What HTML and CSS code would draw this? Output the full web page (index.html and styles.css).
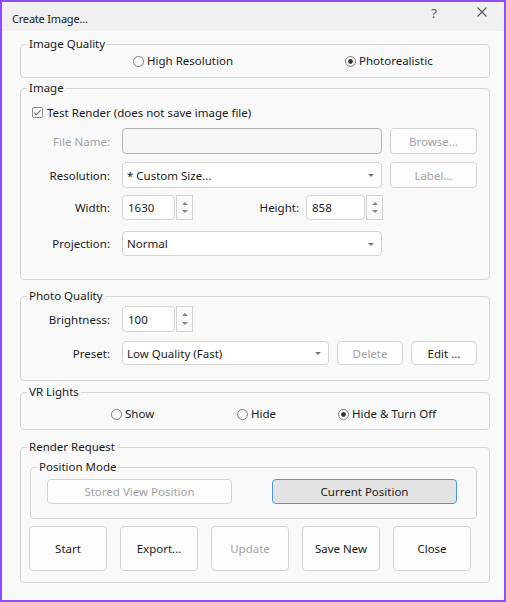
FILE: index.html
```html
<!DOCTYPE html>
<html>
<head>
<meta charset="utf-8">
<link rel="stylesheet" href="styles.css">
</head>
<body>
<div class="window">
  <div class="titlebar">
    <span class="title">Create Image...</span>
    <span class="help">?</span>
    <span class="close"><svg width="10" height="10" viewBox="0 0 10 10"><path d="M0.5 0.5 L9.5 9.5 M9.5 0.5 L0.5 9.5" stroke="#555" stroke-width="1.1" fill="none"/></svg></span>
  </div>
  <div class="content">
    <fieldset class="group g-quality">
      <legend>Image Quality</legend>
      <div class="radios quality-radios">
        <label class="radio"><svg class="rb" width="11" height="11" viewBox="0 0 11 11"><circle cx="5.5" cy="5.5" r="5" fill="#fff" stroke="#7a7a7a"/></svg><span>High Resolution</span></label>
        <label class="radio"><svg class="rb" width="11" height="11" viewBox="0 0 11 11"><circle cx="5.5" cy="5.5" r="5" fill="#fff" stroke="#7a7a7a"/><circle cx="5.5" cy="5.5" r="2.4" fill="#333"/></svg><span>Photorealistic</span></label>
      </div>
    </fieldset>

    <fieldset class="group g-image">
      <legend>Image</legend>
      <div class="check-row">
        <svg class="cb" width="11" height="11" viewBox="0 0 11 11"><rect x="0.5" y="0.5" width="10" height="10" rx="1.5" fill="#fff" stroke="#8a8a8a"/><path d="M2.3 5.6 L4.4 7.7 L8.7 3.2" stroke="#6a6a6a" stroke-width="1.1" fill="none"/></svg>
        <span>Test Render (does not save image file)</span>
      </div>
      <div class="row row-file">
        <span class="lbl disabled">File Name:</span>
        <span class="input input-wide input-disabled"></span>
        <span class="btn btn-side disabled">Browse...</span>
      </div>
      <div class="row row-res">
        <span class="lbl">Resolution:</span>
        <span class="input input-wide select">* Custom Size...<i class="arrow"></i></span>
        <span class="btn btn-side disabled">Label...</span>
      </div>
      <div class="row row-size">
        <span class="lbl">Width:</span>
        <span class="input input-w">1630</span>
        <span class="spin"><i class="up"></i><i class="down"></i></span>
        <span class="lbl-h">Height:</span>
        <span class="input input-h">858</span>
        <span class="spin"><i class="up"></i><i class="down"></i></span>
      </div>
      <div class="row row-proj">
        <span class="lbl">Projection:</span>
        <span class="input input-wide select">Normal<i class="arrow"></i></span>
      </div>
    </fieldset>

    <fieldset class="group g-photo">
      <legend>Photo Quality</legend>
      <div class="row row-bright">
        <span class="lbl">Brightness:</span>
        <span class="input input-w">100</span>
        <span class="spin"><i class="up"></i><i class="down"></i></span>
      </div>
      <div class="row row-preset">
        <span class="lbl">Preset:</span>
        <span class="input input-preset select">Low Quality (Fast)<i class="arrow"></i></span>
        <span class="btn btn-small disabled">Delete</span>
        <span class="btn btn-small">Edit ...</span>
      </div>
    </fieldset>

    <fieldset class="group g-vr">
      <legend>VR Lights</legend>
      <div class="radios vr-radios">
        <label class="radio"><svg class="rb" width="11" height="11" viewBox="0 0 11 11"><circle cx="5.5" cy="5.5" r="5" fill="#fff" stroke="#7a7a7a"/></svg><span>Show</span></label>
        <label class="radio"><svg class="rb" width="11" height="11" viewBox="0 0 11 11"><circle cx="5.5" cy="5.5" r="5" fill="#fff" stroke="#7a7a7a"/></svg><span>Hide</span></label>
        <label class="radio"><svg class="rb" width="11" height="11" viewBox="0 0 11 11"><circle cx="5.5" cy="5.5" r="5" fill="#fff" stroke="#7a7a7a"/><circle cx="5.5" cy="5.5" r="2.4" fill="#333"/></svg><span>Hide &amp; Turn Off</span></label>
      </div>
    </fieldset>

    <fieldset class="group g-render">
      <legend>Render Request</legend>
      <fieldset class="group g-position">
        <legend>Position Mode</legend>
        <div class="pos-buttons">
          <span class="btn btn-pos disabled">Stored View Position</span>
          <span class="btn btn-pos btn-active">Current Position</span>
        </div>
      </fieldset>
      <div class="actions">
        <span class="btn btn-big">Start</span>
        <span class="btn btn-big">Export...</span>
        <span class="btn btn-big disabled">Update</span>
        <span class="btn btn-big">Save New</span>
        <span class="btn btn-big">Close</span>
      </div>
    </fieldset>
  </div>
</div>
</body>
</html>
```

FILE: styles.css
```css
* { box-sizing: border-box; }

body {
  margin: 0;
  font-family: "Noto Sans", "DejaVu Sans", sans-serif;
  font-size: 11.5px;
  color: #1b1b1b;
}

.window {
  width: 506px;
  height: 602px;
  border: 2px solid #8b4ef2;
  background: #f9f9f9;
  display: flex;
  flex-direction: column;
}

.titlebar {
  height: 29px;
  flex: none;
  background: #f0f0f0;
  display: flex;
  align-items: flex-start;
}

.title {
  flex: 1;
  padding: 9px 0 0 10px;
  line-height: 16px;
  font-size: 11px;
  letter-spacing: -0.2px;
}

.help {
  width: 16px;
  margin-top: 3px;
  text-align: center;
  font-size: 13px;
  line-height: 16px;
  color: #555;
}

.close {
  width: 16px;
  margin: 5px 14px 0 32px;
  display: flex;
  justify-content: center;
}

.content {
  padding: 5px 14px 0 18px;
}

.group {
  margin: 0;
  padding: 0;
  border: 1px solid #d5d5d5;
  border-radius: 4px;
  min-width: 0;
}

.group legend {
  margin-left: 6px;
  padding: 0 2px;
  line-height: 16px;
}

/* Radios */
.radios {
  display: grid;
  height: 18px;
  align-items: center;
}

.radio {
  display: flex;
  align-items: center;
  gap: 3px;
  line-height: 16px;
}

.rb { flex: none; }

.g-quality { padding-bottom: 7px; }
.quality-radios {
  padding-left: 112px;
  grid-template-columns: 212px auto;
}

/* Image group */
.g-image { margin-top: 2px; padding-bottom: 23px; }

.check-row {
  display: flex;
  align-items: center;
  gap: 4px;
  height: 16px;
  margin-top: 8px;
  padding-left: 11px;
}

.row {
  display: flex;
  align-items: center;
}

.row-file { margin-top: 8px; height: 26px; }
.row-res { margin-top: 8px; height: 26px; }
.row-size { margin-top: 7px; height: 25px; }
.row-proj { margin-top: 11px; height: 25px; }

.lbl {
  width: 89px;
  margin-right: 12px;
  text-align: right;
  flex: none;
}

.lbl-h {
  width: 106px;
  margin-right: 7px;
  text-align: right;
  flex: none;
}

.disabled { color: #a3a3a3; }

.input {
  position: relative;
  height: 100%;
  background: #fff;
  border: 1px solid #d3d3d3;
  border-radius: 4px;
  padding: 0 5px;
  display: flex;
  align-items: center;
  flex: none;
}

.select { padding-left: 4px; }

.input-wide { width: 260px; }
.input-w { width: 53px; }
.input-h { width: 59px; }
.input-preset { width: 207px; }

.input-disabled {
  background: #f7f7f7;
  border-color: #b4b4b4;
}

.arrow {
  position: absolute;
  right: 7px;
  top: 50%;
  margin-top: -1px;
  width: 0;
  height: 0;
  border-left: 3px solid transparent;
  border-right: 3px solid transparent;
  border-top: 3px solid #777;
}

.spin {
  width: 17px;
  height: 100%;
  margin-left: 1px;
  border: 1px solid #d3d3d3;
  background: #fafafa;
  display: flex;
  flex-direction: column;
  align-items: center;
  justify-content: space-evenly;
  flex: none;
}

.spin .up, .spin .down {
  width: 0;
  height: 0;
  border-left: 3px solid transparent;
  border-right: 3px solid transparent;
}
.spin .up { border-bottom: 3px solid #888; }
.spin .down { border-top: 3px solid #888; }

/* Buttons */
.btn {
  display: flex;
  align-items: center;
  justify-content: center;
  background: #fdfdfd;
  border: 1px solid #d3d3d3;
  border-radius: 4px;
  flex: none;
}

.btn-side {
  width: 87px;
  height: 100%;
  margin-left: 8px;
}

.btn-small {
  width: 66px;
  height: 100%;
  margin-left: 8px;
}

/* Photo group */
.g-photo { margin-top: 8px; padding-bottom: 15px; }
.row-bright { margin-top: 2px; height: 26px; }
.row-preset { margin-top: 9px; height: 24px; }

/* VR group */
.g-vr { margin-top: 3px; padding-bottom: 6px; }
.vr-radios {
  margin-top: 5px;
  padding-left: 90px;
  grid-template-columns: 126px 101px auto;
}

/* Render group */
.g-render { margin-top: 9px; padding-bottom: 11px; }

.g-position {
  margin: 4px 12px 0 9px;
  padding-bottom: 14px;
}

.pos-buttons {
  display: flex;
  margin-top: 4px;
  padding-left: 16px;
  gap: 40px;
}

.btn-pos {
  width: 185px;
  height: 25px;
}

.btn-active {
  background: #e3e3e3;
  border-color: #4d95e2;
}

.actions {
  display: flex;
  gap: 13px;
  margin-top: 7px;
  padding-left: 8px;
}

.btn-big {
  width: 78px;
  height: 45px;
}
```
